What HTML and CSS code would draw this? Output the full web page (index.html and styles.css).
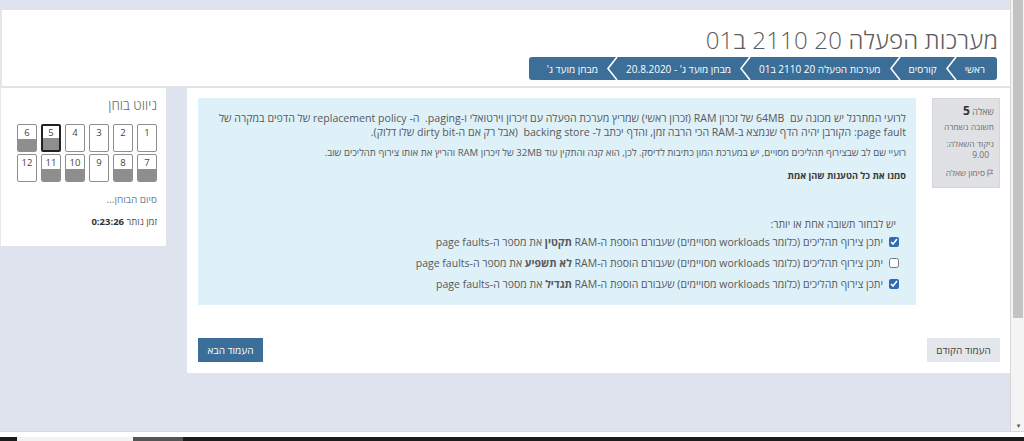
FILE: index.html
```html
<!DOCTYPE html>
<html lang="he">
<head>
<meta charset="utf-8">
<title>מערכות הפעלה 20 2110 ב01</title>
<link rel="stylesheet" href="styles.css">
</head>
<body>
<div class="screen">
  <div class="viewport">
    <div class="page" dir="rtl">
      <div class="topstrip"></div>
      <header class="header">
        <h1 class="title">מערכות הפעלה 20 2110 ב01</h1>
        <div class="crumbs-row">
          <nav class="crumbs">
            <span class="crumb">ראשי</span>
            <svg class="sep" viewBox="0 0 12 23" width="12" height="23"><polyline points="11,0 2,11.5 11,23" fill="none" stroke="#fff" stroke-width="1.6"/></svg>
            <span class="crumb">קורסים</span>
            <svg class="sep" viewBox="0 0 12 23" width="12" height="23"><polyline points="11,0 2,11.5 11,23" fill="none" stroke="#fff" stroke-width="1.6"/></svg>
            <span class="crumb">מערכות הפעלה 20 2110 ב01</span>
            <svg class="sep" viewBox="0 0 12 23" width="12" height="23"><polyline points="11,0 2,11.5 11,23" fill="none" stroke="#fff" stroke-width="1.6"/></svg>
            <span class="crumb">מבחן מועד ג' - 20.8.2020</span>
            <svg class="sep" viewBox="0 0 12 23" width="12" height="23"><polyline points="11,0 2,11.5 11,23" fill="none" stroke="#fff" stroke-width="1.6"/></svg>
            <span class="crumb">מבחן מועד ג'</span>
          </nav>
        </div>
      </header>
      <div class="body-row">
        <main class="main">
          <div class="question">
            <div class="info">
              <div class="qno">שאלה <b>5</b></div>
              <div class="state">תשובה נשמרה</div>
              <div class="grade">ניקוד השאלה:<br><span class="gval">9.00</span></div>
              <div class="flag"><svg viewBox="0 0 8 9" width="7" height="8"><path d="M1 8.5V1 M1 1.2 L6.5 1.2 L5 3.2 L6.5 5.2 L1 5.2" fill="none" stroke="#777" stroke-width="0.9"/></svg> סימון שאלה</div>
            </div>
            <div class="content">
              <p class="qtext p1">לרועי המתרגל יש מכונה עם&nbsp; 64MB של זכרון RAM (זכרון ראשי) שמריץ מערכת הפעלה עם זיכרון וירטואלי ו-paging.&nbsp; ה- replacement policy של הדפים במקרה של<br>page fault: הקורבן יהיה הדף שנמצא ב-RAM הכי הרבה זמן, והדף יכתב ל- backing store&nbsp; (אבל רק אם ה-dirty bit שלו דלוק).</p>
              <p class="qtext p2">רועיי שם לב שבצירוף תהליכים מסויים, יש במערכת המון כתיבות לדיסק. לכן, הוא קנה והתקין עוד 32MB של זיכרון RAM והריץ את אותו צירוף תהליכים שוב.</p>
              <p class="qtext strong">סמנו את כל הטענות שהן אמת</p>
              <div class="prompt">יש לבחור תשובה אחת או יותר:</div>
              <label class="opt"><input type="checkbox" checked> <span>יתכן צירוף תהליכים (כלומר workloads מסויימים) שעבורם הוספת ה-RAM <b>תקטין</b> את מספר ה-page faults</span></label>
              <label class="opt"><input type="checkbox"> <span>יתכן צירוף תהליכים (כלומר workloads מסויימים) שעבורם הוספת ה-RAM <b>לא תשפיע</b> את מספר ה-page faults</span></label>
              <label class="opt"><input type="checkbox" checked> <span>יתכן צירוף תהליכים (כלומר workloads מסויימים) שעבורם הוספת ה-RAM <b>תגדיל</b> את מספר ה-page faults</span></label>
            </div>
          </div>
          <div class="buttons">
            <button class="btn btn-prev">העמוד הקודם</button>
            <button class="btn btn-next">העמוד הבא</button>
          </div>
        </main>
        <aside class="navblock">
          <div class="nav-title">ניווט בוחן</div>
          <div class="qgrid">
            <div class="qbtn"><span>1</span></div>
            <div class="qbtn"><span>2</span></div>
            <div class="qbtn"><span>3</span></div>
            <div class="qbtn"><span>4</span></div>
            <div class="qbtn done current"><span>5</span></div>
            <div class="qbtn done"><span>6</span></div>
            <div class="qbtn done"><span>7</span></div>
            <div class="qbtn done"><span>8</span></div>
            <div class="qbtn"><span>9</span></div>
            <div class="qbtn done"><span>10</span></div>
            <div class="qbtn done"><span>11</span></div>
            <div class="qbtn"><span>12</span></div>
          </div>
          <div class="finish">סיום הבוחן...</div>
          <div class="timer">זמן נותר <b>0:23:26</b></div>
        </aside>
      </div>
    </div>
    <div class="vscroll">
      <div class="thumb"></div>
      <div class="track"></div>
      <div class="arrow">▾</div>
    </div>
  </div>
  <div class="hscroll"></div>
  <div class="taskbar"><div class="seg1"></div><div class="seg2"></div></div>
</div>
</body>
</html>
```

FILE: styles.css
```css
* { box-sizing: border-box; }
html, body { margin: 0; padding: 0; }
body {
  width: 1024px;
  height: 441px;
  overflow: hidden;
  font-family: "Open Sans", "DejaVu Sans", sans-serif;
  color: #4a4a4a;
  background: #dfe3ee;
}
.screen { display: flex; flex-direction: column; height: 441px; }
.viewport { display: flex; height: 431px; direction: ltr; }
.page { width: 1010px; background: #dfe3ee; overflow: hidden; }

.topstrip { height: 10px; background: #dfe3ee; }
.header {
  background: #fff;
  height: 77px;
  padding: 14px 12px 0 12px;
  border-bottom: 1px solid #e3e3e3;
  border-left: 2px solid #e6e6ea;
}
.title {
  margin: 0;
  font-size: 24px;
  line-height: 31px;
  font-weight: 300;
  color: #5c5c5c;
  letter-spacing: 0.2px;
}
.crumbs-row { display: flex; margin-top: 2px; }
.crumbs {
  display: flex;
  align-items: center;
  height: 23px;
  background: #3b6e99;
  border-radius: 3px;
  padding: 0 12px 0 10px;
  color: #fff;
  font-size: 10px;
  margin-right: 1px;
}
.crumb { padding: 0 8px; white-space: nowrap; }
.crumb:first-child { padding-right: 0; }
.sep { display: block; flex: none; }

.body-row { display: flex; gap: 21px; margin-top: 1px; }

.main {
  width: 823px;
  height: 285px;
  background: #fff;
  padding: 10px 10px 0 11px;
}
.question { display: flex; gap: 16px; }
.info {
  width: 68px;
  height: 90px;
  flex: none;
  background: #dfe1e4;
  border: 1px solid #d3d5d8;
  padding: 6px 5px 0 4px;
  font-size: 8.5px;
  line-height: 11px;
  color: #707070;
}
.qno { font-size: 9px; }
.qno b { font-size: 12px; color: #333; font-weight: 700; }
.state { margin-top: 4px; }
.grade { margin-top: 6px; }
.gval { display: block; text-align: right; margin-right: 5px; }
.flag { margin-top: 7px; display: flex; align-items: center; gap: 2px; }
.flag svg { display: block; }

.content {
  flex: 1;
  height: 207px;
  background: #def1f8;
  padding: 13px 10px 0 10px;
  color: #585858;
}
.qtext { margin: 0 0 7px 0; line-height: 14px; }
.p1 { font-size: 10.6px; }
.p2 { font-size: 9.6px; }
.qtext.strong { font-weight: 700; color: #3a3a3a; margin: 9px 0 0 0; font-size: 9.2px; }
.prompt { margin-top: 34px; line-height: 14px; margin-right: 10px; font-size: 10.5px; }
.opt {
  display: flex;
  align-items: center;
  gap: 6px;
  height: 21px;
  line-height: 14px;
  margin-right: 7px;
  font-size: 10.5px;
}
.opt input {
  margin: 0;
  width: 10px;
  height: 10px;
  accent-color: #2d6bb5;
}

.buttons {
  display: flex;
  justify-content: space-between;
  margin-top: 33px;
}
.btn {
  font-family: inherit;
  font-size: 10px;
  height: 24px;
  border: 0;
  border-radius: 0;
  padding: 0;
  white-space: nowrap;
}
.btn-prev { background: #e3e6ea; color: #444; width: 73px; }
.btn-next { background: #3b6e99; color: #fff; width: 65px; }

.navblock {
  width: 166px;
  height: 158px;
  background: #fff;
  padding: 7px 9px 0 0;
  border-left: 1px solid #e8e8ec;
}
.nav-title { font-size: 13.5px; line-height: 20px; font-weight: 300; color: #6a6a6a; }
.qgrid {
  display: grid;
  grid-template-columns: repeat(6, 20px);
  column-gap: 4px;
  row-gap: 2px;
  margin-top: 9px;
}
.qbtn {
  height: 28px;
  border: 1px solid #8f8f8f;
  border-radius: 2px;
  background: #fff;
  display: flex;
  flex-direction: column;
  overflow: hidden;
  font-size: 9.5px;
  color: #444;
}
.qbtn span { height: 14px; line-height: 15px; text-align: center; }
.qbtn.done::after { content: ""; flex: 1; background: #8e8e8e; }
.qbtn.current { border: 2px solid #222; }
.qbtn.current span { height: 12px; line-height: 13px; }
.finish { margin-top: 10px; font-size: 10px; line-height: 14px; color: #6a7f94; }
.timer { margin-top: 9px; font-size: 9.5px; line-height: 14px; color: #555; }
.timer b { color: #333; }

.vscroll {
  width: 14px;
  display: flex;
  flex-direction: column;
  background: #f4f4f4;
  border-left: 1px solid #d6d6d6;
  padding-left: 2px;
}
.thumb { height: 318px; width: 10px; background: #c3c3c3; }
.track { flex: 1; }
.arrow { height: 10px; font-size: 7px; line-height: 10px; color: #555; text-align: center; }

.hscroll { height: 6px; background: #fff; border-top: 1px solid #d8d8d8; }
.taskbar { height: 4px; background: #1c1c1c; display: flex; }
.seg1 { width: 116px; margin-left: 17px; background: #f2f2f2; }
.seg2 { width: 50px; background: #555; }
```
